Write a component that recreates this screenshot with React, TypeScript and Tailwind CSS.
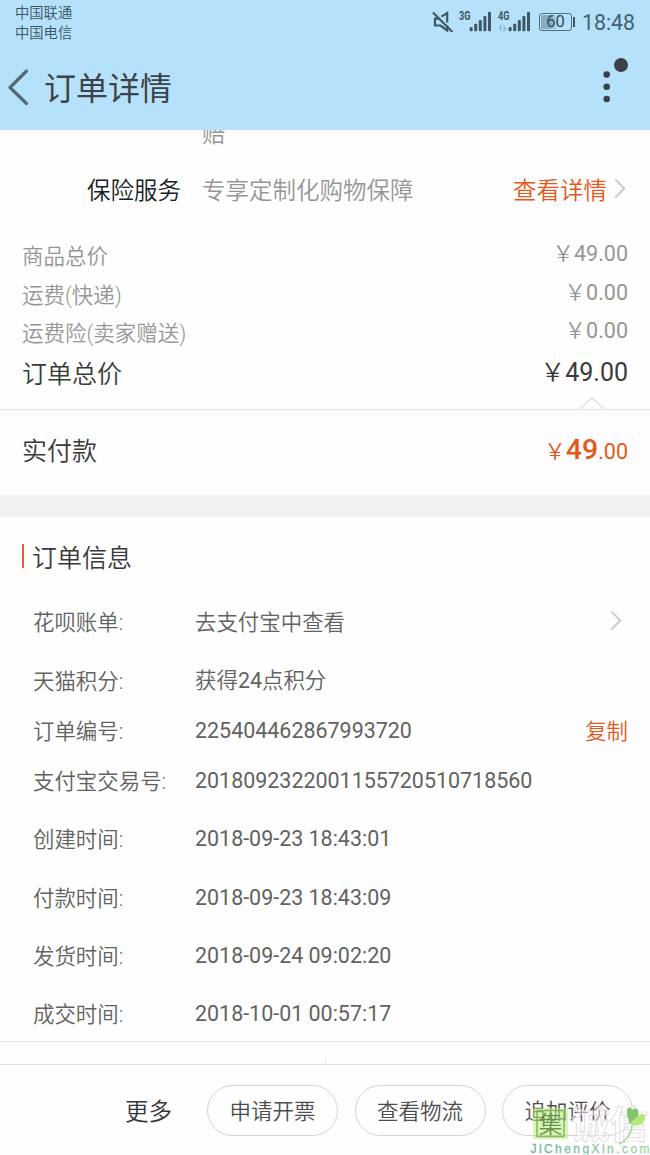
import React from "react";

function Chevron({ className }: { className: string }) {
  return (
    <svg viewBox="0 0 12 22" fill="none" className={className}>
      <path d="M1 1.5 10.5 11 1 20.5" stroke="#c9c9c9" strokeWidth="2" />
    </svg>
  );
}

function Signal({ label, data }: { label: string; data?: boolean }) {
  return (
    <svg viewBox="0 0 34 22" className="h-[22px] w-[34px] shrink-0" fill="#3e5866">
      <text x="0" y="10" fontSize="12.5" fontWeight="700" textLength="11.5" lengthAdjust="spacingAndGlyphs">
        {label}
      </text>
      {data && (
        <g stroke="#8db9d1" strokeWidth="1.3" fill="none">
          <path d="M2.8 21V15.5L1 18M6.2 15v5.5L8.4 18" />
        </g>
      )}
      <rect x="10.6" y="17" width="3" height="4.2" rx="1" />
      <rect x="15.2" y="13.8" width="3" height="7.4" rx="1" />
      <rect x="19.8" y="10" width="3" height="11.2" rx="1" />
      <rect x="24.4" y="6" width="3" height="15.2" rx="1" />
      <rect x="29" y="1.8" width="3" height="19.4" rx="1" />
    </svg>
  );
}

function Header() {
  return (
    <header className="h-[130px] shrink-0 bg-[#b5e1fb]">
      <div className="flex h-[44px] justify-between">
        <div className="pt-[3px] pl-[15px] text-[14.3px] leading-[20px] font-[350] text-[#3a5563]">
          <div>中国联通</div>
          <div>中国电信</div>
        </div>
        <div className="flex items-start pt-[10px] pr-[15px]">
          <svg viewBox="0 0 22 22" className="mr-[5px] h-[22px] w-[22px]" fill="none" stroke="#3e5866" strokeWidth="2.2">
            <path d="M9.5 6.6 15.2 3V12.5M7.5 8.6H3v6.9h5.5l6.7 5V15.5" />
            <path d="M1 2.5 20.5 22" />
          </svg>
          <Signal label="3G" />
          <span className="w-[5px]" />
          <Signal label="4G" data />
          <div className="mt-[3px] ml-[7px] flex items-center">
            <div className="flex h-[18px] w-[33px] items-center justify-center rounded-[3px] border border-[#506f80] bg-[linear-gradient(90deg,#87adc1_0_11px,transparent_17px)] bg-clip-content p-px text-[16.5px] leading-none text-[#334d5a]">
              60
            </div>
            <div className="ml-px h-[10px] w-[2px] bg-[#3e5866]" />
          </div>
          <div className="mt-px ml-[7px] text-[21.3px] leading-[24px] text-[#43606f]">18:48</div>
        </div>
      </div>
      <div className="flex h-[86px] items-center pl-[7px]">
        <svg viewBox="0 0 22 38" className="h-[38px] w-[22px]" fill="none" stroke="#536a77" strokeWidth="3.2" strokeLinecap="round" strokeLinejoin="round">
          <path d="M19.5 3 3 19.5 19.5 35.5" />
        </svg>
        <h1 className="mt-[4px] ml-[15px] text-[32px] leading-[44px] text-[#3d4348]">订单详情</h1>
        <svg viewBox="0 0 40 60" className="mr-[10px] ml-auto h-[60px] w-[40px] self-start" fill="#3b4048">
          <circle cx="21" cy="21" r="7" />
          <circle cx="6.7" cy="30.5" r="3.3" />
          <circle cx="6.7" cy="42.7" r="3.3" />
          <circle cx="6.7" cy="55" r="3.3" />
        </svg>
      </div>
    </header>
  );
}

function PriceRow({ label, price }: { label: string; price: string }) {
  return (
    <div className="flex h-[38.6px] items-center justify-between text-[21.5px] leading-[30px] text-[#969696]">
      <span className="mt-[4px] font-[350]">{label}</span>
      <span className="mb-[4px]">
        <Yen />
        {price}
      </span>
    </div>
  );
}

function Yen() {
  return <span className="font-['Noto_Sans_CJK_SC',sans-serif] font-[350]">￥</span>;
}

function InfoRow({
  label,
  value,
  gap = "",
  action,
}: {
  label: string;
  value: React.ReactNode;
  gap?: string;
  action?: React.ReactNode;
}) {
  return (
    <div className={"flex h-[50px] items-center pr-[22px] pl-[33px] text-[21.45px] leading-[30px] text-[#626262] " + gap}>
      <span className="mt-[2px] w-[162px] font-[350]">{label}</span>
      <span className="flex-1">{value}</span>
      {action}
    </div>
  );
}

function Pill({ children }: { children: React.ReactNode }) {
  return (
    <button className="h-[51px] w-[131px] shrink-0 rounded-full border border-[#d4d4d4] pt-[3px] text-[21.5px] leading-[30px] font-[350] text-[#4d4d50]">
      {children}
    </button>
  );
}

function Watermark() {
  return (
    <svg viewBox="0 0 130 60" className="pointer-events-none absolute right-0 bottom-0 h-[60px] w-[130px]">
      <defs>
        <linearGradient id="domain" x1="0" x2="1">
          <stop offset="0" stopColor="#6db3a6" />
          <stop offset="1" stopColor="#a5d6a0" />
        </linearGradient>
      </defs>
      <rect x="13" y="13" width="35" height="31" fill="#b9ec7c" fillOpacity="0.55" />
      <rect x="17" y="15.5" width="27" height="26" fill="none" stroke="#79ad50" strokeOpacity="0.85" strokeWidth="1.5" />
      <text x="18.5" y="38" fontSize="24" fontWeight="350" fill="#568340" fillOpacity="0.85">集</text>
      <g fontSize="38" fontWeight="700" fill="#fff" fillOpacity="0.5" stroke="#dcd4dd" strokeWidth="0.7">
        <text x="51" y="43" textLength="77" lengthAdjust="spacingAndGlyphs">诚信</text>
      </g>
      <path d="M109 26C104 12 109 10 113 15c3-5 8 2 4 8l-8 6z" fill="#84c66e" />
      <path d="M112 30c2-9 14-16 13-7-1 7-8 9-13 7z" fill="#b6e779" />
      <path d="M112 27c1 9-4 18-13 22" fill="none" stroke="#a9d98e" strokeWidth="1.5" />
      <text x="10.5" y="57.7" fontSize="12" fontFamily="Liberation Sans, sans-serif" textLength="119" fill="url(#domain)" stroke="url(#domain)" strokeWidth="0.3">
        JiChengXin.com
      </text>
    </svg>
  );
}

export default function App() {
  return (
    <div className="relative flex h-[1155px] w-[650px] flex-col overflow-hidden bg-[#fefefe] font-[Roboto,'Noto_Sans_CJK_SC',sans-serif]">
      <Header />
      <section>
        <div className="h-[32px] overflow-hidden pl-[202px]">
          <div className="mt-[-13px] text-[23.3px] leading-[34px] font-[350] text-[#969696]">赔</div>
        </div>
        <div className="flex h-[54px] items-center pr-[24px] pl-[87px] text-[23.5px] leading-[34px]">
          <span className="mt-[3px] w-[115px] font-[350] text-[#172027]">保险服务</span>
          <span className="mt-[3px] font-[350] text-[#969696]">专享定制化购物保障</span>
          <span className="mt-[3px] ml-auto font-[350] text-[#e4581a]">查看详情</span>
          <Chevron className="mb-[2px] ml-[7px] h-[21px] w-[12px]" />
        </div>
        <div className="px-[22px] pt-[20px]">
          <PriceRow label="商品总价" price="49.00" />
          <PriceRow label="运费(快递)" price="0.00" />
          <PriceRow label="运费险(卖家赠送)" price="0.00" />
          <div className="flex h-[42px] items-center justify-between text-[25px] leading-[34px] text-[#3a3a3a]">
            <span className="mt-[5px] font-[350]">订单总价</span>
            <span className="mb-[3px]">
              <Yen />
              49.00
            </span>
          </div>
        </div>
        <div className="flex h-[17px] justify-end pr-[46px]">
          <svg viewBox="0 0 24 14" className="mt-[3px] h-[14px] w-[24px]" fill="none" stroke="#dfdfe2" strokeWidth="1.3">
            <path d="M0 12 12 1 24 12" />
          </svg>
        </div>
      </section>
      <section className="-mt-[2px] flex h-[86px] items-center justify-between border-t border-[#e4e4e7] bg-[#fdfcfe] px-[22px] text-[25px] leading-[34px] text-[#3a3a3a]">
        <span className="font-[350]">实付款</span>
        <span className="mb-[3px] text-[21.5px] text-[#e4581a]">
          <Yen />
          <span className="text-[28.5px] font-medium">49</span>.00
        </span>
      </section>
      <div className="h-[22px] shrink-0 bg-[#f2f0f3]" />
      <section className="h-[524px] shrink-0">
        <div className="flex h-[80px] items-center pl-[22px]">
          <span className="mr-[8px] mb-[1px] h-[24px] w-[2px] bg-[#e4602a]" />
          <h2 className="mt-[4px] text-[25px] leading-[34px] font-[350] text-[#3a3a3a]">订单信息</h2>
        </div>
        <InfoRow
          label="花呗账单:"
          value={<span className="relative top-px font-[350]">去支付宝中查看</span>}
          action={<Chevron className="mr-[6px] mb-[2px] h-[21px] w-[12px]" />}
        />
        <InfoRow
          label="天猫积分:"
          value={
            <>
              <span className="font-[350]">获得</span>24<span className="font-[350]">点积分</span>
            </>
          }
          gap="mt-[9px]"
        />
        <InfoRow
          label="订单编号:"
          value="225404462867993720"
          action={<span className="mt-[2px] font-[350] text-[#e4581a]">复制</span>}
        />
        <InfoRow label="支付宝交易号:" value="2018092322001155720510718560" />
        <InfoRow label="创建时间:" value="2018-09-23 18:43:01" gap="mt-[8px]" />
        <InfoRow label="付款时间:" value="2018-09-23 18:43:09" gap="mt-[9px]" />
        <InfoRow label="发货时间:" value="2018-09-24 09:02:20" gap="mt-[8px]" />
        <InfoRow label="成交时间:" value="2018-10-01 00:57:17" gap="mt-[8px]" />
      </section>
      <div className="flex h-[23px] shrink-0 items-end justify-center border-t border-[#dfe2e2]">
        <span className="h-[4px] w-px bg-[#e4e4e4]" />
      </div>
      <footer className="flex flex-1 items-start border-t border-[#dfe2e2] pt-[20px] pl-[125px]">
        <span className="mt-[2px] w-[82px] shrink-0 text-[23.5px] leading-[51px] font-[350] text-[#38383c]">更多</span>
        <div className="flex gap-[16.5px]">
          <Pill>申请开票</Pill>
          <Pill>查看物流</Pill>
          <Pill>追加评价</Pill>
        </div>
      </footer>
      <Watermark />
    </div>
  );
}
